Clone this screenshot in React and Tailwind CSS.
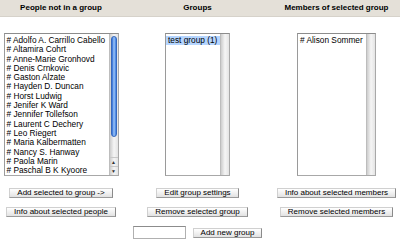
import React from "react";

const people = [
  "Adolfo A. Carrillo Cabello",
  "Altamira Cohrt",
  "Anne-Marie Gronhovd",
  "Denis Crnkovic",
  "Gaston Alzate",
  "Hayden D. Duncan",
  "Horst Ludwig",
  "Jenifer K Ward",
  "Jennifer Tollefson",
  "Laurent C Dechery",
  "Leo Riegert",
  "Maria Kalbermatten",
  "Nancy S. Hanway",
  "Paola Marin",
  "Paschal B K Kyoore",
];

const Scrollbar = ({ active }) => (
  <div className="relative w-[9px] h-full bg-gradient-to-r from-[#cdcdcd] via-[#f5f5f5] to-[#e4e4e4] border-l border-[#bdbdbd]">
    {active && (
      <>
        <div className="absolute left-[1px] right-[1px] top-[2px] h-[101px] rounded-full bg-gradient-to-r from-[#2a68d4] via-[#9ec6f6] to-[#3a7be0] border border-[#3568bc]" />
        <div className="absolute left-0 right-0 bottom-[9px] h-[9px] flex items-center justify-center text-[5px] leading-none text-[#333] border-t border-[#c8c8c8]">
          ▲
        </div>
        <div className="absolute left-0 right-0 bottom-0 h-[9px] flex items-center justify-center text-[5px] leading-none text-[#333] border-t border-[#c8c8c8]">
          ▼
        </div>
      </>
    )}
  </div>
);

const ListBox = ({ width, children, active }) => (
  <div
    className={`mx-auto h-[143px] flex bg-white border border-[#a8a8a8] border-t-[#8c8c8c] border-l-[#9a9a9a] ${width}`}
  >
    <div className="flex-1 overflow-hidden pt-[2px]">{children}</div>
    <Scrollbar active={active} />
  </div>
);

const Item = ({ children, selected }) => (
  <div
    className={`pl-[2px] text-[8.3px] leading-[9.3px] whitespace-nowrap ${
      selected ? "bg-[#b5d5ff]" : ""
    }`}
  >
    {children}
  </div>
);

const Button = ({ children }) => (
  <button className="h-[10px] px-[7px] text-[8px] leading-none whitespace-nowrap bg-gradient-to-b from-white to-[#e2e2e2] border border-[#d0d0d0] border-r-[#8a8a8a] border-b-[#9a9a9a]">
    {children}
  </button>
);

export default function App() {
  return (
    <div className="w-[400px] h-[252px] bg-white text-black font-['Liberation_Sans',sans-serif]">
      <div className="grid grid-cols-[122px_151px_127px] h-[17px] items-center bg-[#e4e0d8] border-b border-[#d6d2ca] text-[8px] font-bold">
        <div className="text-center">People not in a group</div>
        <div className="text-center">Groups</div>
        <div className="text-center">Members of selected group</div>
      </div>

      <div className="grid grid-cols-[122px_151px_127px] pt-[16px]">
        <ListBox width="w-[115px]" active>
          {people.map((p) => (
            <Item key={p}># {p}</Item>
          ))}
        </ListBox>
        <ListBox width="w-[65px]">
          <Item selected>test group (1)</Item>
        </ListBox>
        <ListBox width="w-[79px]">
          <Item># Alison Sommer</Item>
        </ListBox>
      </div>

      <div className="grid grid-cols-[122px_151px_127px] pt-[12px] justify-items-center">
        <Button>Add selected to group -&gt;</Button>
        <Button>Edit group settings</Button>
        <Button>Info about selected members</Button>
      </div>

      <div className="grid grid-cols-[122px_151px_127px] pt-[9px] justify-items-center">
        <Button>Info about selected people</Button>
        <Button>Remove selected group</Button>
        <Button>Remove selected members</Button>
      </div>

      <div className="grid grid-cols-[122px_151px_127px] pt-[9px]">
        <div />
        <div className="flex items-center justify-center gap-[7px]">
          <input className="w-[53px] h-[13px] bg-white border border-[#b0b0b0] border-t-[#8c8c8c]" />
          <Button>Add new group</Button>
        </div>
        <div />
      </div>
    </div>
  );
}
